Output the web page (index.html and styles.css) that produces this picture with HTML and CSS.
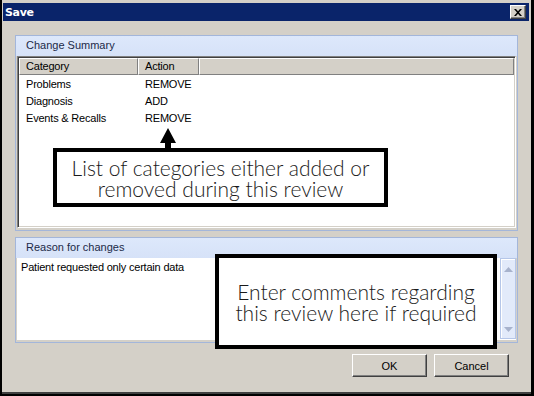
FILE: index.html
```html
<!DOCTYPE html>
<html>
<head>
<meta charset="utf-8">
<link rel="stylesheet" href="styles.css">
</head>
<body>
<div class="window">
  <div class="titlebar">
    <span class="title">Save</span>
    <span class="close"><svg width="8" height="7" viewBox="0 0 8 7"><path d="M0 0h2l2 2.2L6 0h2L5 3.5 8 7H6L4 4.8 2 7H0l3-3.5z" fill="#000"/></svg></span>
  </div>
  <div class="content">
    <section class="group summary">
      <div class="group-head">Change Summary</div>
      <div class="listview">
        <div class="lv-head">
          <div class="col c1">Category</div>
          <div class="col c2">Action</div>
          <div class="col c3"></div>
        </div>
        <div class="row"><span class="c1">Problems</span><span class="c2">REMOVE</span></div>
        <div class="row"><span class="c1">Diagnosis</span><span class="c2">ADD</span></div>
        <div class="row"><span class="c1">Events &amp; Recalls</span><span class="c2">REMOVE</span></div>
      </div>
    </section>
    <section class="group reason">
      <div class="group-head">Reason for changes</div>
      <div class="memo">
        <div class="memo-text">Patient requested only certain data</div>
        <div class="vscroll">
          <svg width="9" height="5" viewBox="0 0 9 5"><path d="M0 5L4.5 0 9 5z" fill="#a7b2cc"/></svg>
          <svg width="9" height="5" viewBox="0 0 9 5"><path d="M0 0h9L4.5 5z" fill="#a7b2cc"/></svg>
        </div>
      </div>
    </section>
    <div class="buttons">
      <button class="btn">OK</button>
      <button class="btn">Cancel</button>
    </div>
  </div>

  <svg class="arrow" width="18" height="22" viewBox="0 0 18 22"><path d="M9 0L17 15H12V22H6V15H1z" fill="#000"/></svg>
  <div class="callout callout-list"><div class="cl-line">List of categories either added or</div><div class="cl-line">removed during this review</div></div>
  <div class="callout callout-reason"><div class="cl-line">Enter comments regarding</div><div class="cl-line">this review here if required</div></div>
</div>
</body>
</html>
```

FILE: styles.css
```css
html, body {
  margin: 0;
  padding: 0;
}
body {
  width: 534px;
  height: 396px;
  background: #000;
  overflow: hidden;
  font-family: "Liberation Sans", Arial, sans-serif;
  font-size: 11px;
  color: #000;
}
.window {
  position: relative;
  margin-left: 2px;
  width: 529px;
  height: 394px;
  box-sizing: border-box;
  background: #d4d0c8;
  padding: 3px 2px 0 1px;
  border-bottom: 2px solid #404040;
}
.titlebar {
  height: 18px;
  background: #0a246a;
  display: flex;
  align-items: center;
  justify-content: space-between;
  padding: 0 3px 0 2px;
}
.title {
  color: #fff;
  font-family: "DejaVu Sans", Verdana, sans-serif;
  font-weight: bold;
  font-size: 11px;
  letter-spacing: -0.3px;
}
.close {
  width: 16px;
  height: 14px;
  box-sizing: border-box;
  background: #d4d0c8;
  border-top: 1px solid #fff;
  border-left: 1px solid #fff;
  border-right: 1px solid #404040;
  border-bottom: 1px solid #404040;
  box-shadow: inset -1px -1px 0 #808080;
  display: flex;
  align-items: center;
  justify-content: center;
}
.content {
  padding: 14px 11px 0 12px;
}
.group {
  border: 1px solid #a3b6da;
  background: #d4d0c8;
}
.group-head {
  height: 20px;
  line-height: 19px;
  padding-left: 10px;
  color: #1c2a48;
  background: linear-gradient(#dde8fb, #d6e2f8);
  font-size: 11px;
}
.summary {
  height: 196px;
  box-sizing: border-box;
}
.listview {
  margin: 0 1px;
  height: 172px;
  box-sizing: border-box;
  background: #fff;
  border-top: 1px solid #808080;
  border-left: 1px solid #808080;
  border-right: 1px solid #fff;
  border-bottom: 1px solid #fff;
  box-shadow: inset 1px 1px 0 #404040, inset -1px -1px 0 #d4d0c8;
  padding: 1px;
}
.lv-head {
  display: flex;
  height: 17px;
}
.col {
  box-sizing: border-box;
  background: #d4d0c8;
  border-top: 1px solid #fff;
  border-left: 1px solid #fff;
  border-right: 1px solid #808080;
  border-bottom: 1px solid #808080;
  line-height: 15px;
  padding-left: 6px;
  letter-spacing: -0.2px;
}
.col.c1 { width: 119px; }
.col.c2 { width: 61px; }
.col.c3 { flex: 1; }
.row {
  display: flex;
  height: 17px;
  line-height: 18px;
  letter-spacing: -0.2px;
}
.row .c1 { width: 119px; padding-left: 7px; box-sizing: border-box; }
.row .c2 { padding-left: 7px; }
.summary .row:first-of-type { margin-top: 1px; }
.reason {
  margin-top: 6px;
  height: 106px;
  box-sizing: border-box;
}
.memo {
  margin: 0 1px;
  height: 82px;
  background: #fff;
  display: flex;
}
.memo-text {
  flex: 1;
  padding: 3px 0 0 4px;
  letter-spacing: -0.2px;
}
.vscroll {
  width: 16px;
  box-sizing: border-box;
  margin: 0 0 1px 0;
  background: #e2eafa;
  border: 1px solid #b5c6e8;
  box-shadow: inset 1px 1px 0 #fff;
  display: flex;
  flex-direction: column;
  align-items: center;
  justify-content: space-between;
  padding: 8px 0 6px;
}
.buttons {
  display: flex;
  justify-content: flex-end;
  gap: 7px;
  margin-top: 11px;
  padding-right: 9px;
}
.btn {
  width: 75px;
  height: 23px;
  box-sizing: border-box;
  margin: 0;
  padding: 0;
  background: #d4d0c8;
  border-top: 1px solid #fff;
  border-left: 1px solid #fff;
  border-right: 1px solid #404040;
  border-bottom: 1px solid #404040;
  box-shadow: inset -1px -1px 0 #808080;
  font-family: "Liberation Sans", Arial, sans-serif;
  font-size: 11px;
  color: #000;
}
.arrow {
  position: absolute;
  left: 157px;
  top: 128px;
}
.callout {
  position: absolute;
  box-sizing: border-box;
  border: 4px solid #000;
  background: #fff;
  display: flex;
  flex-direction: column;
  align-items: center;
  justify-content: center;
  text-align: center;
  font-family: Lato, "Open Sans", sans-serif;
  font-weight: 300;
  font-size: 21px;
  color: #1a1a1a;
}
.cl-line {
  height: 21px;
  line-height: 21px;
  white-space: nowrap;
}
.callout-list {
  left: 51px;
  top: 148px;
  width: 335px;
  height: 59px;
}
.callout-reason {
  left: 213px;
  top: 254px;
  width: 282px;
  height: 95px;
}
```
